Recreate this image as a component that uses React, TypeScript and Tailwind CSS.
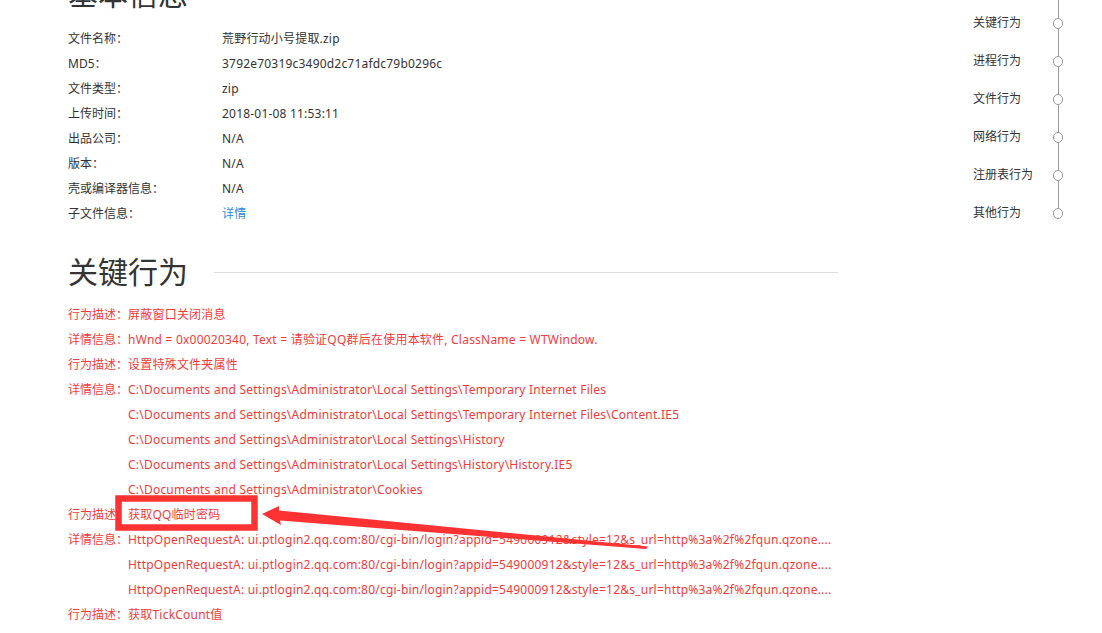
import React from "react";

const infoRows = [
  { label: "文件名称：", value: "荒野行动小号提取.zip" },
  { label: "MD5：", value: "3792e70319c3490d2c71afdc79b0296c" },
  { label: "文件类型：", value: "zip" },
  { label: "上传时间：", value: "2018-01-08 11:53:11" },
  { label: "出品公司：", value: "N/A" },
  { label: "版本：", value: "N/A" },
  { label: "壳或编译器信息：", value: "N/A" },
  { label: "子文件信息：", value: "详情", link: true },
];

const http =
  "HttpOpenRequestA: ui.ptlogin2.qq.com:80/cgi-bin/login?appid=549000912&style=12&s_url=http%3a%2f%2fqun.qzone....";

const behaviors = [
  { label: "行为描述：", value: "屏蔽窗口关闭消息" },
  {
    label: "详情信息：",
    value: "hWnd = 0x00020340, Text = 请验证QQ群后在使用本软件, ClassName = WTWindow.",
  },
  { label: "行为描述：", value: "设置特殊文件夹属性" },
  {
    label: "详情信息：",
    value: "C:\\Documents and Settings\\Administrator\\Local Settings\\Temporary Internet Files",
  },
  { label: "", value: "C:\\Documents and Settings\\Administrator\\Local Settings\\Temporary Internet Files\\Content.IE5" },
  { label: "", value: "C:\\Documents and Settings\\Administrator\\Local Settings\\History" },
  { label: "", value: "C:\\Documents and Settings\\Administrator\\Local Settings\\History\\History.IE5" },
  { label: "", value: "C:\\Documents and Settings\\Administrator\\Cookies" },
  { label: "行为描述：", value: "获取QQ临时密码" },
  { label: "详情信息：", value: http },
  { label: "", value: http },
  { label: "", value: http },
  { label: "行为描述：", value: "获取TickCount值" },
];

const navItems = ["关键行为", "进程行为", "文件行为", "网络行为", "注册表行为", "其他行为"];

export default function App() {
  return (
    <div
      className="relative w-[1102px] h-[633px] overflow-hidden bg-white flex"
      style={{ fontFamily: '"Noto Sans", "Noto Sans CJK SC", sans-serif' }}
    >
      {/* main column */}
      <div className="w-[838px] pl-[68px] -mt-[26px] shrink-0">
        <h2 className="text-[30px] leading-[40px] text-[#333] font-normal mb-[12px]">基本信息</h2>
        <div className="flex flex-col">
          {infoRows.map((r, i) => (
            <div key={i} className="flex h-[25px] items-center text-[12px] text-[#333]">
              <span className="w-[154px]">{r.label}</span>
              <span className={"tracking-[0.2px] " + (r.link ? "text-[#2b8ae2]" : "")}>{r.value}</span>
            </div>
          ))}
        </div>

        <div className="flex items-center mt-[26px] mb-[10px]">
          <h2 className="text-[30px] leading-[40px] text-[#333] font-normal">关键行为</h2>
          <div className="flex-1 h-px bg-[#ddd] ml-[26px]" />
        </div>
        <div className="flex flex-col">
          {behaviors.map((b, i) => (
            <div key={i} className="flex h-[25px] items-center text-[12px] text-[#f43b3b] whitespace-nowrap">
              <span className="w-[60px] shrink-0">{b.label}</span>
              <span className="tracking-[0.22px]">{b.value}</span>
            </div>
          ))}
        </div>
      </div>

      {/* right timeline nav */}
      <div className="ml-[135px] mt-[4px] flex flex-col">
        {navItems.map((n, i) => (
          <div key={i} className="flex h-[38px] items-center">
            <span className="w-[80px] text-[12px] text-[#333]">{n}</span>
            <div className="relative w-[10px] h-full flex items-center justify-center">
              <div
                className={
                  "absolute left-[4.5px] w-px bg-[#999] top-0 " +
                  (i === navItems.length - 1 ? "h-1/2" : "h-full")
                }
              />
              {i === 0 && <div className="absolute left-[4.5px] w-px bg-[#999] -top-[10px] h-[10px]" />}
              <div className="relative w-[11px] h-[11px] rounded-full border border-[#999] bg-white" />
            </div>
          </div>
        ))}
      </div>

      {/* annotation overlay */}
      <svg className="absolute inset-0 pointer-events-none" width="1102" height="633" viewBox="0 0 1102 633">
        <rect x="118.5" y="498.5" width="136" height="29" fill="none" stroke="#fd3333" strokeWidth="6.5" />
        <polygon
          points="262,514 279,506 279,510.5 648,546.5 646,549 280,520.5 281,525"
          fill="#fd3333"
        />
      </svg>
    </div>
  );
}
